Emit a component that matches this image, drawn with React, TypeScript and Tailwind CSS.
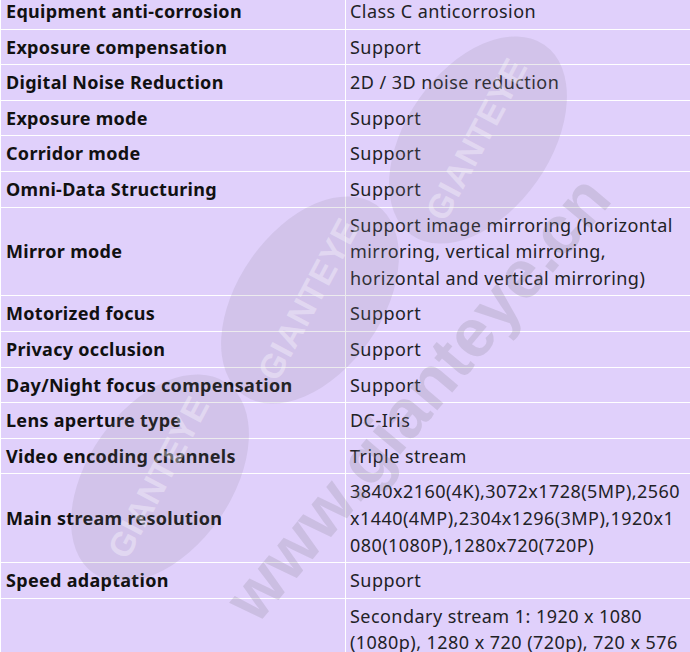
const rows: [string, string[]][] = [
  ["Equipment anti-corrosion", ["Class C anticorrosion"]],
  ["Exposure compensation", ["Support"]],
  ["Digital Noise Reduction", ["2D / 3D noise reduction"]],
  ["Exposure mode", ["Support"]],
  ["Corridor mode", ["Support"]],
  ["Omni-Data Structuring", ["Support"]],
  [
    "Mirror mode",
    [
      "Support image mirroring (horizontal",
      "mirroring, vertical mirroring,",
      "horizontal and vertical mirroring)",
    ],
  ],
  ["Motorized focus", ["Support"]],
  ["Privacy occlusion", ["Support"]],
  ["Day/Night focus compensation", ["Support"]],
  ["Lens aperture type", ["DC-Iris"]],
  ["Video encoding channels", ["Triple stream"]],
  [
    "Main stream resolution",
    [
      "3840x2160(4K),3072x1728(5MP),2560",
      "x1440(4MP),2304x1296(3MP),1920x1",
      "080(1080P),1280x720(720P)",
    ],
  ],
  ["Speed adaptation", ["Support"]],
  [
    "Sub stream resolution",
    [
      "Secondary stream 1: 1920 x 1080",
      "(1080p), 1280 x 720 (720p), 720 x 576",
      "(D1), 640 x 480 (VGA), 640 x 360",
      "(360p); Secondary stream 2: 720 x",
      "576 (D1), 640 x 480 (VGA), 640 x",
      "360 (360p), 352 x 288 (CIF)",
    ],
  ],
];

function Watermark() {
  return (
    <svg
      className="pointer-events-none absolute inset-0"
      width="690"
      height="652"
      viewBox="0 0 690 652"
    >
      <g fill="#8a8494" fillOpacity="0.16">
        <ellipse cx="478" cy="140" rx="72" ry="116" transform="rotate(35 478 140)" />
        <ellipse cx="310" cy="300" rx="72" ry="116" transform="rotate(35 310 300)" />
        <ellipse cx="160" cy="478" rx="72" ry="116" transform="rotate(35 160 478)" />
      </g>
      <g
        fill="#ffffff"
        fillOpacity="0.35"
        fontFamily="'Liberation Sans', sans-serif"
        fontWeight="bold"
        fontSize="34"
      >
        <text x="478" y="150" textAnchor="middle" transform="rotate(-62 478 140)">GIANTEYE</text>
        <text x="310" y="310" textAnchor="middle" transform="rotate(-62 310 300)">GIANTEYE</text>
        <text x="160" y="488" textAnchor="middle" transform="rotate(-62 160 478)">GIANTEYE</text>
      </g>
      <text
        x="420"
        y="420"
        textAnchor="middle"
        fill="#8a8494"
        fillOpacity="0.24"
        fontFamily="'Liberation Sans', sans-serif"
        fontWeight="bold"
        fontSize="68"
        transform="rotate(-50 420 400)"
      >
        www.gianteye.cn
      </text>
    </svg>
  );
}

export default function App() {
  return (
    <div className="relative h-[652px] w-[690px] overflow-hidden bg-[#e0d0fb] font-['Noto_Sans',sans-serif] text-[18px] leading-[26.6px] tracking-[0.45px] text-[#222226]">
      <table className="-mt-[7px] w-[690px] table-fixed border-collapse">
        <colgroup>
          <col className="w-[345px]" />
          <col className="w-[345px]" />
        </colgroup>
        <tbody>
          {rows.map(([label, value]) => (
            <tr key={label}>
              <td className="whitespace-nowrap border border-white px-[5px] py-[4px] align-middle font-bold tracking-[0.3px] text-[#111]">
                {label}
              </td>
              <td className="whitespace-nowrap border border-white px-[4px] py-[4px] align-middle">
                {value.map((line) => (
                  <div key={line}>{line}</div>
                ))}
              </td>
            </tr>
          ))}
        </tbody>
      </table>
      <Watermark />
    </div>
  );
}
